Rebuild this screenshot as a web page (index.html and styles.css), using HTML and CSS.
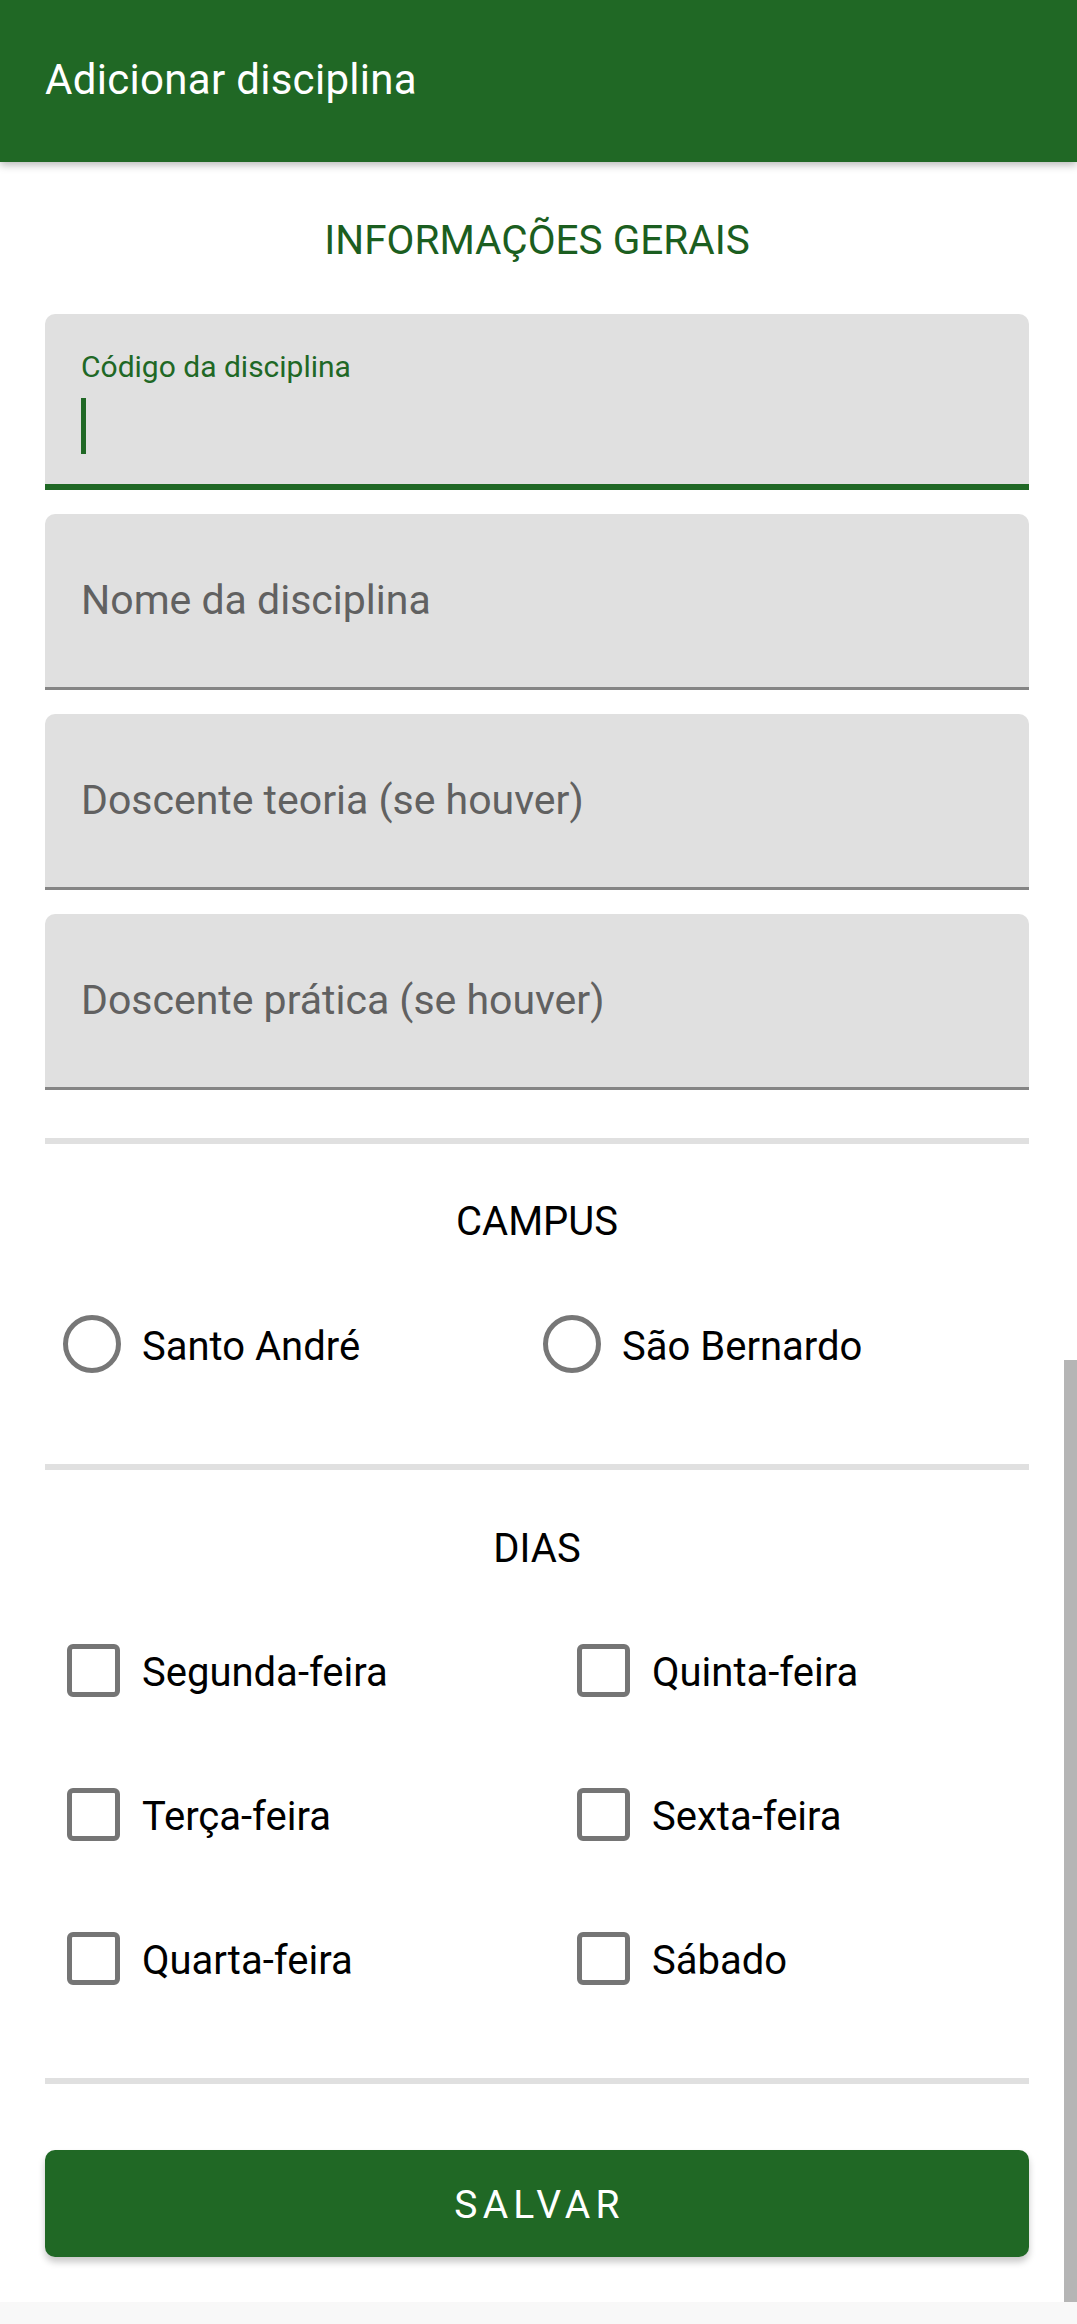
FILE: index.html
```html
<!DOCTYPE html>
<html lang="pt">
<head>
<meta charset="utf-8">
<title>Adicionar disciplina</title>
<link rel="stylesheet" href="styles.css">
</head>
<body>
<header class="appbar">
  <h1 class="appbar-title">Adicionar disciplina</h1>
</header>
<main class="form">
  <h2 class="section-title section-title-green">INFORMAÇÕES GERAIS</h2>
  <div class="fields">
    <div class="field field-focused">
      <span class="field-label">Código da disciplina</span>
      <span class="field-cursor"></span>
    </div>
    <div class="field"><span class="field-hint">Nome da disciplina</span></div>
    <div class="field"><span class="field-hint">Doscente teoria (se houver)</span></div>
    <div class="field"><span class="field-hint">Doscente prática (se houver)</span></div>
  </div>

  <div class="divider divider-first"></div>

  <h2 class="section-title section-campus">CAMPUS</h2>
  <div class="radios">
    <label class="radio"><span class="radio-circle"></span><span class="option-text">Santo André</span></label>
    <label class="radio"><span class="radio-circle"></span><span class="option-text">São Bernardo</span></label>
  </div>

  <div class="divider divider-second"></div>

  <h2 class="section-title section-dias">DIAS</h2>
  <div class="checks">
    <label class="check"><span class="check-box"></span><span class="option-text">Segunda-feira</span></label>
    <label class="check"><span class="check-box"></span><span class="option-text">Quinta-feira</span></label>
    <label class="check"><span class="check-box"></span><span class="option-text">Terça-feira</span></label>
    <label class="check"><span class="check-box"></span><span class="option-text">Sexta-feira</span></label>
    <label class="check"><span class="check-box"></span><span class="option-text">Quarta-feira</span></label>
    <label class="check"><span class="check-box"></span><span class="option-text">Sábado</span></label>
  </div>

  <div class="divider divider-third"></div>

  <button class="save-button" type="button">SALVAR</button>
</main>
<div class="scrollbar"></div>
<div class="bottom-strip"></div>
</body>
</html>
```
FILE: styles.css
```css
html, body {
  margin: 0;
  padding: 0;
}
body {
  position: relative;
  width: 1077px;
  height: 2324px;
  overflow: hidden;
  background: #ffffff;
  font-family: Roboto, "Noto Sans", "Liberation Sans", sans-serif;
  color: #000000;
}
.appbar {
  height: 162px;
  box-sizing: border-box;
  padding: 55px 0 0 45px;
  background: #206825;
  box-shadow: 0 3px 8px rgba(0, 0, 0, 0.28);
  position: relative;
  z-index: 2;
}
.appbar-title {
  margin: 0;
  font-size: 42px;
  line-height: 49px;
  font-weight: 400;
  color: #ffffff;
  letter-spacing: 0.3px;
}
.form {
  padding: 55px 48px 0 45px;
}
.section-title {
  margin: 0;
  font-size: 40px;
  line-height: 47px;
  font-weight: 400;
  text-align: center;
  color: #000000;
}
.section-title-green {
  color: #1b5e20;
  font-size: 40.5px;
}
.fields {
  margin-top: 50px;
  display: flex;
  flex-direction: column;
  gap: 24px;
}
.field {
  height: 176px;
  box-sizing: border-box;
  background: #e0e0e0;
  border-radius: 10px 10px 0 0;
  border-bottom: 3px solid #858585;
  padding-left: 36px;
  display: flex;
  align-items: center;
}
.field-focused {
  border-bottom: 6px solid #206825;
  flex-direction: column;
  align-items: flex-start;
  padding-top: 35px;
}
.field-label {
  font-size: 30px;
  line-height: 35px;
  color: #206825;
}
.field-cursor {
  display: block;
  margin-top: 14px;
  width: 5px;
  height: 56px;
  background: #206825;
}
.field-hint {
  font-size: 41px;
  line-height: 47px;
  color: #616161;
}
.divider {
  height: 6px;
  background: #e0e0e0;
}
.divider-first {
  margin-top: 48px;
}
.section-campus {
  margin-top: 54px;
}
.radios {
  margin-top: 69px;
  display: grid;
  grid-template-columns: 480px 1fr;
  padding-left: 18px;
}
.radio {
  display: flex;
  align-items: center;
  gap: 21px;
  height: 59px;
}
.radio-circle {
  width: 58px;
  height: 58px;
  box-sizing: border-box;
  border: 5px solid #777777;
  border-radius: 50%;
  flex: none;
}
.option-text {
  font-size: 40px;
  line-height: 47px;
  padding-top: 5px;
}
.divider-second {
  margin-top: 91px;
}
.section-dias {
  margin-top: 55px;
}
.checks {
  margin-top: 26px;
  display: grid;
  grid-template-columns: 510px 1fr;
  grid-auto-rows: 144px;
  padding-left: 22px;
}
.check {
  display: flex;
  align-items: center;
  gap: 22px;
}
.check-box {
  width: 53px;
  height: 53px;
  box-sizing: border-box;
  border: 5px solid #757575;
  border-radius: 6px;
  flex: none;
}
.divider-third {
  margin-top: 48px;
}
.save-button {
  display: block;
  width: 100%;
  height: 107px;
  margin-top: 66px;
  border: none;
  border-radius: 10px;
  background: #206825;
  color: #ffffff;
  font-family: Roboto, "Noto Sans", "Liberation Sans", sans-serif;
  font-size: 39px;
  font-weight: 400;
  letter-spacing: 5.2px;
  line-height: 47px;
  padding: 4px 0 0 5px;
  box-shadow: 0 5px 7px rgba(0, 0, 0, 0.22);
}
.scrollbar {
  position: absolute;
  right: 0;
  top: 1360px;
  width: 13px;
  height: 942px;
  background: #b5b5b5;
}
.bottom-strip {
  position: absolute;
  left: 0;
  right: 0;
  bottom: 0;
  height: 22px;
  background: #f8f8f8;
}
```
